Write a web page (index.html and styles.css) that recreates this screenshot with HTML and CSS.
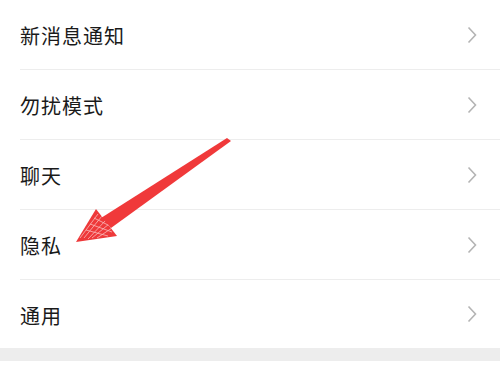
FILE: index.html
```html
<!DOCTYPE html>
<html lang="zh">
<head>
<meta charset="utf-8">
<link rel="stylesheet" href="styles.css">
</head>
<body>
<div class="page">
  <ul class="list">
    <li class="row"><span class="label">新消息通知</span><svg class="chev" viewBox="0 0 10 18"><path d="M1.5 1.5 L8.5 9 L1.5 16.5"/></svg></li>
    <li class="row"><span class="label">勿扰模式</span><svg class="chev" viewBox="0 0 10 18"><path d="M1.5 1.5 L8.5 9 L1.5 16.5"/></svg></li>
    <li class="row"><span class="label">聊天</span><svg class="chev" viewBox="0 0 10 18"><path d="M1.5 1.5 L8.5 9 L1.5 16.5"/></svg></li>
    <li class="row"><span class="label">隐私</span><svg class="chev" viewBox="0 0 10 18"><path d="M1.5 1.5 L8.5 9 L1.5 16.5"/></svg></li>
    <li class="row"><span class="label">通用</span><svg class="chev" viewBox="0 0 10 18"><path d="M1.5 1.5 L8.5 9 L1.5 16.5"/></svg></li>
  </ul>
  <div class="gap"></div>
  <div class="after"></div>
  <svg class="arrow" viewBox="0 0 500 375" width="500" height="375">
    <defs>
      <clipPath id="head"><polygon points="76,242 96,209 117,236"/></clipPath>
    </defs>
    <polygon points="227,138 231,141 111,228 101,218" fill="#f0393a"/>
    <polygon points="76,242 96,209 117,236" fill="#ee3a3b"/>
    <g clip-path="url(#head)" stroke="#fbd0d0" stroke-width="0.8" opacity="0.85">
      <path d="M80,238 L98,214 M84,238 L102,216 M88,239 L106,220 M92,238 L109,224 M97,238 L112,228 M86,230 L108,236 M90,224 L112,232 M94,218 L110,226"/>
    </g>
  </svg>
</div>
</body>
</html>
```

FILE: styles.css
```css
html, body {
  margin: 0;
  padding: 0;
  background: #ffffff;
}
.page {
  position: relative;
  width: 500px;
  height: 375px;
  overflow: hidden;
  background: #ffffff;
  font-family: "Noto Sans CJK SC", "Noto Sans", sans-serif;
}
.list {
  list-style: none;
  margin: 0;
  padding: 0 0 0 20px;
}
.row {
  display: flex;
  align-items: center;
  justify-content: space-between;
  height: 69px;
  padding-right: 23px;
  border-bottom: 1px solid #ededed;
}
.row:last-child {
  height: 68px;
  border-bottom: none;
}
.label {
  font-size: 20px;
  color: #1a1a1a;
  letter-spacing: 1px;
  padding-top: 2px;
}
.chev {
  width: 10px;
  height: 18px;
  fill: none;
  stroke: #b4b4b4;
  stroke-width: 1.6;
}
.gap {
  height: 13px;
  background: #ededed;
}
.after {
  height: 13px;
  background: #ffffff;
}
.arrow {
  position: absolute;
  left: 0;
  top: 0;
}
```
